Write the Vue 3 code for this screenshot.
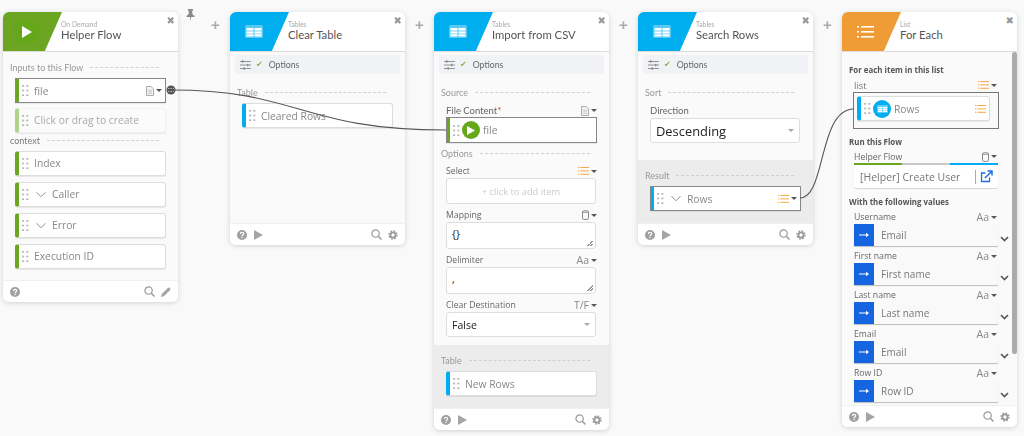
<template>
  <div class="canvas">
    <!-- shared icons -->
    <svg class="defs" aria-hidden="true">
      <symbol id="i-grip" viewBox="0 0 8 13">
        <g fill="#b5b5b5"><rect x="0" y="0" width="2.4" height="2"/><rect x="5" y="0" width="2.4" height="2"/><rect x="0" y="5.5" width="2.4" height="2"/><rect x="5" y="5.5" width="2.4" height="2"/><rect x="0" y="11" width="2.4" height="2"/><rect x="5" y="11" width="2.4" height="2"/></g>
      </symbol>
      <symbol id="i-table" viewBox="0 0 18 13">
        <rect width="18" height="13" rx="1.5" fill="#fff" fill-opacity=".35"/>
        <rect x="1.5" y="3" width="7" height="2.6" fill="#fff"/><rect x="9.5" y="3" width="7" height="2.6" fill="#fff"/>
        <rect x="1.5" y="6.4" width="7" height="2.2" fill="#fff"/><rect x="9.5" y="6.4" width="7" height="2.2" fill="#fff"/>
        <rect x="1.5" y="9.3" width="7" height="2.2" fill="#fff"/><rect x="9.5" y="9.3" width="7" height="2.2" fill="#fff"/>
      </symbol>
      <symbol id="i-list" viewBox="0 0 11 8">
        <g fill="#f7a84a"><rect y="0" width="1.4" height="1"/><rect x="2.4" y="0" width="8.6" height="1"/><rect y="3.4" width="1.4" height="1"/><rect x="2.4" y="3.4" width="8.6" height="1"/><rect y="6.8" width="1.4" height="1"/><rect x="2.4" y="6.8" width="8.6" height="1"/></g>
      </symbol>
      <symbol id="i-doc" viewBox="0 0 8 10">
        <path d="M.5.5h4.6L7.5 3v6.5h-7z" fill="#f4f4f4" stroke="#aaa"/><path d="M2 4.2h4M2 5.8h4M2 7.4h4" stroke="#bbb" stroke-width=".7"/>
      </symbol>
      <symbol id="i-db" viewBox="0 0 7 10">
        <rect x=".5" y=".8" width="6" height="8.6" rx="1.2" fill="none" stroke="#888"/><path d="M.5 2.4h6" stroke="#888" stroke-width=".8"/>
      </symbol>
      <symbol id="i-help" viewBox="0 0 10 10">
        <circle cx="5" cy="5" r="5" fill="#a0a0a0"/>
        <path d="M3.4 3.9c0-2 3.3-2 3.3-.1 0 1.200-1.700 1.200-1.700 2.500" fill="none" stroke="#fff" stroke-width="1.100"/><rect x="4.400" y="6.900" width="1.200" height="1.200" fill="#fff"/>
      </symbol>
      <symbol id="i-search" viewBox="0 0 12 12">
        <circle cx="5" cy="5" r="4" fill="none" stroke="#999" stroke-width="1.300"/><path d="M8 8l3.400 3.400" stroke="#999" stroke-width="1.600"/>
      </symbol>
      <symbol id="i-gear" viewBox="0 0 12 12">
        <circle cx="6" cy="6" r="3.100" fill="none" stroke="#999" stroke-width="2.200"/>
        <circle cx="6" cy="6" r="4.800" fill="none" stroke="#999" stroke-width="1.600" stroke-dasharray="2 1.770"/>
      </symbol>
      <symbol id="i-sliders" viewBox="0 0 11 10">
        <g stroke="#888" stroke-width=".9"><path d="M0 1.500h11M0 5h11M0 8.500h11"/></g>
        <g fill="#888"><rect x="2" y=".3" width="1.400" height="2.400"/><rect x="7" y="3.800" width="1.400" height="2.400"/><rect x="3.500" y="7.300" width="1.400" height="2.400"/></g>
      </symbol>
    </svg>

    <!-- On Demand -->
    <section class="card c-first">
      <header class="head">
        <div class="band green">
          <span class="badge"><svg width="11" height="12" viewBox="0 0 11 12"><path d="M1 0l10 6-10 6z" fill="#fff"/></svg></span>
        </div>
        <div class="titles"><small>On Demand</small><strong>Helper Flow</strong></div>
        <span class="close">✖</span>
      </header>
      <div class="body b-flow">
        <div class="sec"><span>Inputs to this Flow</span><i></i></div>
        <div class="pill g active a-input">
          <svg class="grip"><use href="#i-grip"/></svg><span class="txt">file</span>
          <span class="type"><svg width="8" height="10"><use href="#i-doc"/></svg><b class="caret"></b></span>
        </div>
        <div class="pill ghost">
          <svg class="grip"><use href="#i-grip"/></svg><span class="txt">Click or drag to create</span>
        </div>
        <div class="sec s-context"><span>context</span><i></i></div>
        <div v-for="f in contextFields" :key="f.name" class="pill g">
          <svg class="grip"><use href="#i-grip"/></svg>
          <svg v-if="f.open" class="chev" viewBox="0 0 11 7"><path d="M.5 1l5 5 5-5" fill="none" stroke="#888"/></svg>
          <span class="txt">{{ f.name }}</span>
        </div>
      </div>
      <footer class="foot">
        <svg class="fi"><use href="#i-help"/></svg>
        <span class="sp"></span>
        <svg class="fi"><use href="#i-search"/></svg>
        <svg class="fi" viewBox="0 0 11 11"><path d="M0 11l.8-3.200L7.800.8a1 1 0 0 1 1.400 0l1 1a1 1 0 0 1 0 1.400L3.200 10.200z" fill="#a5a5a5"/></svg>
      </footer>
    </section>

    <span class="plus">+</span>

    <!-- Clear Table -->
    <section class="card">
      <header class="head">
        <div class="band blue"><svg class="tbl"><use href="#i-table"/></svg></div>
        <div class="titles"><small>Tables</small><strong>Clear Table</strong></div>
        <span class="close">✖</span>
      </header>
      <div class="opts"><svg width="11" height="10"><use href="#i-sliders"/></svg><em>✔</em><span>Options</span></div>
      <div class="body b-clear">
        <div class="sec"><span>Table</span><i></i></div>
        <div class="pill b">
          <svg class="grip"><use href="#i-grip"/></svg><span class="txt">Cleared Rows</span>
        </div>
      </div>
      <footer class="foot">
        <svg class="fi"><use href="#i-help"/></svg>
        <svg class="fi run" viewBox="0 0 9 10"><path d="M0 0l9 5-9 5z" fill="#a5a5a5"/></svg>
        <span class="sp"></span>
        <svg class="fi"><use href="#i-search"/></svg>
        <svg class="fi"><use href="#i-gear"/></svg>
      </footer>
    </section>

    <span class="plus">+</span>

    <!-- Import from CSV -->
    <section class="card">
      <header class="head">
        <div class="band blue"><svg class="tbl"><use href="#i-table"/></svg></div>
        <div class="titles"><small>Tables</small><strong>Import from CSV</strong></div>
        <span class="close">✖</span>
      </header>
      <div class="opts"><svg width="11" height="10"><use href="#i-sliders"/></svg><em>✔</em><span>Options</span></div>
      <div class="body b-import">
        <div class="sec"><span>Source</span><i></i></div>
        <div class="lab l-file"><span>File Content<u>*</u></span><span class="type"><svg width="8" height="10"><use href="#i-doc"/></svg><b class="caret"></b></span></div>
        <div class="pill g active a-tall">
          <svg class="grip"><use href="#i-grip"/></svg>
          <span class="token green-t"><svg width="8" height="9" viewBox="0 0 8 9"><path d="M0 0l8 4.500L0 9z" fill="#fff"/></svg></span>
          <span class="txt">file</span>
        </div>
        <div class="sec s-options"><span>Options</span><i></i></div>
        <div class="lab"><span>Select</span><span class="type"><svg width="11" height="8"><use href="#i-list"/></svg><b class="caret"></b></span></div>
        <div class="box add">+ click to add item</div>
        <div class="lab"><span>Mapping</span><span class="type"><svg width="7" height="10"><use href="#i-db"/></svg><b class="caret"></b></span></div>
        <div class="box area"><span>{}</span></div>
        <div class="lab"><span>Delimiter</span><span class="type">Aa<b class="caret"></b></span></div>
        <div class="box area"><span>,</span></div>
        <div class="lab"><span>Clear Destination</span><span class="type">T/F<b class="caret"></b></span></div>
        <div class="box sel"><span>False</span><b class="caret small"></b></div>
      </div>
      <div class="result r-import">
        <div class="sec"><span>Table</span><i></i></div>
        <div class="pill b">
          <svg class="grip"><use href="#i-grip"/></svg><span class="txt">New Rows</span>
        </div>
      </div>
      <footer class="foot">
        <svg class="fi"><use href="#i-help"/></svg>
        <svg class="fi run" viewBox="0 0 9 10"><path d="M0 0l9 5-9 5z" fill="#a5a5a5"/></svg>
        <span class="sp"></span>
        <svg class="fi"><use href="#i-search"/></svg>
        <svg class="fi"><use href="#i-gear"/></svg>
      </footer>
    </section>

    <span class="plus">+</span>

    <!-- Search Rows -->
    <section class="card">
      <header class="head">
        <div class="band blue"><svg class="tbl"><use href="#i-table"/></svg></div>
        <div class="titles"><small>Tables</small><strong>Search Rows</strong></div>
        <span class="close">✖</span>
      </header>
      <div class="opts"><svg width="11" height="10"><use href="#i-sliders"/></svg><em>✔</em><span>Options</span></div>
      <div class="body b-search">
        <div class="sec"><span>Sort</span><i></i></div>
        <div class="lab l-file"><span>Direction</span></div>
        <div class="box sel big"><span>Descending</span><b class="caret small"></b></div>
      </div>
      <div class="result r-search">
        <div class="sec"><span>Result</span><i></i></div>
        <div class="pill b active">
          <svg class="grip"><use href="#i-grip"/></svg>
          <svg class="chev" viewBox="0 0 11 7"><path d="M.5 1l5 5 5-5" fill="none" stroke="#888"/></svg>
          <span class="txt">Rows</span>
          <span class="type"><svg width="11" height="8"><use href="#i-list"/></svg><b class="caret"></b></span>
        </div>
      </div>
      <footer class="foot">
        <svg class="fi"><use href="#i-help"/></svg>
        <svg class="fi run" viewBox="0 0 9 10"><path d="M0 0l9 5-9 5z" fill="#a5a5a5"/></svg>
        <span class="sp"></span>
        <svg class="fi"><use href="#i-search"/></svg>
        <svg class="fi"><use href="#i-gear"/></svg>
      </footer>
    </section>

    <span class="plus">+</span>

    <!-- For Each -->
    <section class="card">
      <header class="head">
        <div class="band orange">
          <svg class="lst" viewBox="0 0 17 12"><g fill="#fff"><rect y="0" width="2" height="1.600"/><rect x="4" y="0" width="13" height="1.600"/><rect y="5" width="2" height="1.600"/><rect x="4" y="5" width="13" height="1.600"/><rect y="10" width="2" height="1.600"/><rect x="4" y="10" width="13" height="1.600"/></g></svg>
        </div>
        <div class="titles"><small>List</small><strong>For Each</strong></div>
        <span class="close">✖</span>
      </header>
      <div class="body b-each">
        <div class="scroll"></div>
        <div class="bold">For each item in this list</div>
        <div class="lab l-list"><span>list</span><span class="type"><svg width="11" height="8"><use href="#i-list"/></svg><b class="caret"></b></span></div>
        <div class="drop">
          <div class="pill b">
            <svg class="grip"><use href="#i-grip"/></svg>
            <span class="token blue-t"><svg width="11" height="8"><use href="#i-table"/></svg></span>
            <span class="txt">Rows</span>
            <span class="type"><svg width="11" height="8"><use href="#i-list"/></svg></span>
          </div>
        </div>
        <div class="bold b-run">Run this Flow</div>
        <div class="lab l-helper"><span>Helper Flow</span><span class="type"><svg width="7" height="10"><use href="#i-db"/></svg><b class="caret"></b></span></div>
        <div class="picker">
          <div class="stripe"><i></i><i></i><i></i></div>
          <div class="pick-row">
            <span>[Helper] Create User</span>
            <i class="pick-sep"></i>
            <svg width="13" height="13" viewBox="0 0 13 13"><path d="M9.500 7.500v4h-8V3h4" fill="none" stroke="#1a6fe0" stroke-width="1.300"/><path d="M5 8l6-6M7.500 1h4.500v4.500" fill="none" stroke="#1a6fe0" stroke-width="1.500"/></svg>
          </div>
        </div>
        <div class="bold b-with">With the following values</div>
        <template v-for="v in eachValues" :key="v.label">
          <div class="lab l-val"><span>{{ v.label }}</span><span class="type">Aa<b class="caret"></b></span></div>
          <div class="val">
            <span class="arrow"><svg width="10" height="6" viewBox="0 0 10 6"><path d="M0 3h8" stroke="#fff" stroke-width="1.200"/><path d="M7 .8L10 3 7 5.200z" fill="#fff"/></svg></span>
            <span class="val-txt">{{ v.value }}</span>
            <svg class="more" viewBox="0 0 9 6"><path d="M1 1l3.500 3.500L8 1" fill="none" stroke="#555" stroke-width="1.600"/></svg>
          </div>
        </template>
      </div>
      <footer class="foot">
        <svg class="fi"><use href="#i-help"/></svg>
        <svg class="fi run" viewBox="0 0 9 10"><path d="M0 0l9 5-9 5z" fill="#a5a5a5"/></svg>
        <span class="sp"></span>
        <svg class="fi"><use href="#i-search"/></svg>
        <svg class="fi"><use href="#i-gear"/></svg>
      </footer>
    </section>

    <!-- pin -->
    <svg class="pin" width="9" height="12" viewBox="0 0 9 12"><path d="M2 0h5v1L6.300 2v3L8.500 7v1H5.100L4.500 12 3.900 8H.5V7L2.700 5V2L2 1z" fill="#8a8a8a"/></svg>

    <!-- connectors -->
    <svg class="wires" width="1024" height="436">
      <path d="M171 90C300 90 300 130 446 130" fill="none" stroke="#555" stroke-width="1.100"/>
      <path d="M800 198C826 198 818 109 854 109" fill="none" stroke="#555" stroke-width="1.100"/>
      <circle cx="171" cy="90" r="4.500" fill="#555"/>
      <path d="M168 88.500h6M168 91.500h6" stroke="#ccc" stroke-width=".8" stroke-dasharray="1.500 1"/>
    </svg>
  </div>
</template>

<script setup>
const contextFields = [
  { name: 'Index', open: false },
  { name: 'Caller', open: true },
  { name: 'Error', open: true },
  { name: 'Execution ID', open: false }
]

const eachValues = [
  { label: 'Username', value: 'Email' },
  { label: 'First name', value: 'First name' },
  { label: 'Last name', value: 'Last name' },
  { label: 'Email', value: 'Email' },
  { label: 'Row ID', value: 'Row ID' }
]
</script>

<style>
html, body {
  margin: 0;
  background: #f9f9f9;
  overflow: hidden;
}
</style>

<style scoped>
.canvas {
  position: relative;
  width: 1024px;
  height: 436px;
  box-sizing: border-box;
  display: flex;
  align-items: flex-start;
  padding: 12px 0 0 3px;
  font-family: "Open Sans", sans-serif;
  color: #777;
  overflow: hidden;
  filter: blur(.3px);
}
.defs { position: absolute; width: 0; height: 0; }

.card {
  flex: none;
  position: relative;
  width: 175px;
  background: #fafafa;
  border-radius: 6px;
  box-shadow: 0 1px 5px rgba(0, 0, 0, .16);
  overflow: hidden;
}
.plus {
  flex: none;
  width: 29px;
  height: 26px;
  text-align: center;
  font: bold 15px/26px "Liberation Sans", sans-serif;
  color: #aaa;
}
.c-first { margin-right: 23px; }

.head {
  display: flex;
  height: 39px;
  background: #fff;
  border-bottom: 1px solid #dcdcdc;
}
.band {
  flex: none;
  width: 59px;
  height: 39px;
  display: flex;
  align-items: center;
  clip-path: polygon(0 0, 100% 0, 71% 100%, 0 100%);
}
.green { background: #6ba522; }
.blue { background: #00aeef; }
.orange { background: #f09c36; }
.badge {
  margin-left: 11px;
  width: 25px;
  height: 25px;
  border-radius: 50%;
  background: #64a81a;
  display: flex;
  align-items: center;
  justify-content: center;
}
.tbl { width: 18px; height: 13px; margin-left: 15px; }
.lst { width: 17px; height: 12px; margin-left: 15px; }
.titles {
  margin: 7px 0 0 -1px;
  display: flex;
  flex-direction: column;
  font-family: Lato, sans-serif;
}
.titles small { font-size: 6.800px; line-height: 10px; color: #aaa; }
.titles strong { font-size: 11.300px; line-height: 12px; font-weight: 400; color: #555; }
.close {
  position: absolute;
  top: 2px;
  right: 3px;
  font: 10px/14px "DejaVu Sans", sans-serif;
  color: #999;
}

.opts {
  display: flex;
  align-items: center;
  height: 19px;
  margin: 3px 5px 0;
  padding-left: 5px;
  background: #f1f2f6;
  border-radius: 2px;
  font: 8.700px Lato, sans-serif;
  color: #666;
}
.opts em { font: 8px "DejaVu Sans", sans-serif; color: #7db53a; margin: 0 0 0 5px; }
.opts span { margin-left: 6px; }

.body { padding: 8px 12px 0; }
.b-flow { height: 228px; box-sizing: border-box; }
.b-clear { height: 149px; box-sizing: border-box; padding-top: 11px; }
.b-import { height: 271px; box-sizing: border-box; padding-top: 11px; }
.b-search { height: 86px; box-sizing: border-box; padding-top: 11px; }
.b-each { position: relative; height: 353px; box-sizing: border-box; padding-top: 12px; }

.sec {
  display: flex;
  align-items: center;
  height: 14px;
  margin: 0 0 4px -5px;
  font: 9px Lato, sans-serif;
  color: #999;
}
.sec i { flex: 1; margin: 0 7px; border-top: 1px dashed #d0d0d0; }
.s-context { margin-top: 1px; margin-bottom: 3px; color: #777; }
.s-options { margin-top: -3px; margin-bottom: 4px; }

.pill {
  display: flex;
  align-items: center;
  box-sizing: border-box;
  height: 25px;
  margin-bottom: 6px;
  background: #fff;
  border: 1px solid #ddd;
  border-left: 4px solid;
  border-radius: 3px;
  box-shadow: 0 1px 1px rgba(0, 0, 0, .08);
}
.pill.g { border-left-color: #6ba522; }
.pill.b { border-left-color: #00aeef; }
.pill.active {
  border: 1.500px solid #777;
  border-left: 4px solid;
  border-radius: 1px;
  outline: 1px solid #888;
  outline-offset: -1px;
}
.pill.g.active { border-left-color: #6ba522; }
.pill.b.active { border-left-color: #00aeef; }
.a-input { margin-bottom: 5px; }
.a-tall { height: 26px; }
.pill.ghost {
  background: #fbfbfb;
  border-color: #f2f2f2;
  border-left-color: #afd38b;
  height: 24.500px;
  margin-bottom: 0;
}
.pill.ghost .txt { color: #aaa; }
.grip { flex: none; width: 7px; height: 11px; margin: 0 5px 0 3px; }
.chev { flex: none; width: 10px; height: 7px; margin: 0 6px 0 2px; }
.txt { font-size: 10.300px; color: #888; white-space: nowrap; }
.pill .type { margin-left: auto; margin-right: 3px; }

.type {
  display: inline-flex;
  align-items: center;
  gap: 2px;
  font-size: 10.500px;
  color: #888;
}
.caret {
  display: inline-block;
  width: 0;
  height: 0;
  border: 3px solid transparent;
  border-top: 3.500px solid #555;
  border-bottom: 0;
}
.caret.small { border-top-color: #aaa; }

.token {
  flex: none;
  width: 18px;
  height: 18px;
  margin: 0 3px 0 -3px;
  border-radius: 50%;
  display: flex;
  align-items: center;
  justify-content: center;
}
.green-t { background: #64a81a; }
.blue-t { background: #00aeef; }

.lab {
  display: flex;
  justify-content: space-between;
  align-items: center;
  height: 14px;
  font-size: 8.700px;
  color: #666;
}
.l-file { margin: 5px 0 0; height: 13px; font: 9.500px Lato, sans-serif; }
.lab u { color: #e0342a; text-decoration: none; }
.box {
  box-sizing: border-box;
  height: 26px;
  margin: 0 1px 4px 0;
  background: #fff;
  border: 1px solid #ddd;
  border-radius: 3px;
  font-size: 10.500px;
  color: #222;
}
.add { display: flex; align-items: center; justify-content: center; font-size: 9.300px; color: #ccc; }
.area { position: relative; height: 27px; padding: 4px 5px; line-height: 14px; margin-bottom: 4px; }
.area::after {
  content: "";
  position: absolute;
  right: 2px;
  bottom: 2px;
  width: 6px;
  height: 6px;
  background: linear-gradient(135deg, transparent 50%, #999 50%, #999 60%, transparent 60%, transparent 75%, #999 75%, #999 85%, transparent 85%);
}
.sel { display: flex; align-items: center; justify-content: space-between; padding: 0 5px; height: 25px; }
.big { font-size: 12.900px; margin-top: 1px; }

.result { background: #ececed; padding: 8px 12px 0; box-sizing: border-box; height: 63px; }
.result .sec { margin-bottom: 4px; }

.foot {
  display: flex;
  align-items: center;
  gap: 6px;
  height: 22px;
  padding: 0 7px;
  background: #fff;
  border-top: 1px solid #f0f0f0;
  box-sizing: border-box;
}
.sp { flex: 1; }
.fi { width: 10px; height: 10px; }
.run { width: 9px; margin-left: 1px; }
.foot .fi:nth-last-child(2) { width: 11px; height: 11px; }

.scroll {
  position: absolute;
  top: 0;
  right: 0;
  width: 5px;
  height: 302px;
  background: #aaaaae;
  border-radius: 3px;
}
.bold { margin-left: -5px; font-size: 7.900px; line-height: 12px; font-weight: 700; color: #555; }
.l-list { margin: 2px 0 0; width: 143px; }
.l-list span:first-child { font-size: 9.500px; color: #777; }
.drop {
  box-sizing: border-box;
  width: 146px;
  height: 37px;
  margin: 0 0 0 -1px;
  padding: 3px 8px 3px 3px;
  border: 1.500px solid #777;
  display: flex;
}
.drop .pill { flex: 1; height: 25px; margin: 0; }
.b-run { margin-top: 7px; }
.l-helper { margin: 2px 0 0; width: 143px; height: 13px; }
.picker {
  width: 144px;
  height: 25px;
  background: #fff;
  border-radius: 2px;
  box-shadow: 0 1px 1px rgba(0, 0, 0, .15);
}
.stripe { display: flex; height: 2px; }
.stripe i { flex: 1; }
.stripe i:nth-child(1) { background: #6ba522; }
.stripe i:nth-child(2) { background: #c8c8c8; }
.stripe i:nth-child(3) { background: #00aeef; }
.pick-row {
  display: flex;
  align-items: center;
  height: 23px;
  padding: 0 5px 0 6px;
  font-size: 10.500px;
  color: #777;
}
.pick-sep { height: 14px; margin: 0 4px 0 auto; border-left: 1px solid #aaa; }
.b-with { margin-top: 8px; }
.l-val { box-sizing: border-box; height: 16px; width: 143px; padding-top: 2px; }
.val {
  position: relative;
  display: flex;
  align-items: center;
  width: 144px;
  height: 22px;
  background: #f9f9f9;
  border-radius: 1px;
  box-shadow: 0 1px 1px rgba(0, 0, 0, .25);
  margin-bottom: 1px;
}
.arrow {
  flex: none;
  width: 20px;
  height: 22px;
  background: #1565e0;
  display: flex;
  align-items: center;
  justify-content: center;
}
.val-txt { margin-left: 7px; font-size: 10px; color: #777; }
.more { position: absolute; right: -11px; top: 12px; width: 9px; height: 6px; }

.pin { position: absolute; left: 186px; top: 9px; }
.wires { position: absolute; left: 0; top: 0; pointer-events: none; }
</style>
